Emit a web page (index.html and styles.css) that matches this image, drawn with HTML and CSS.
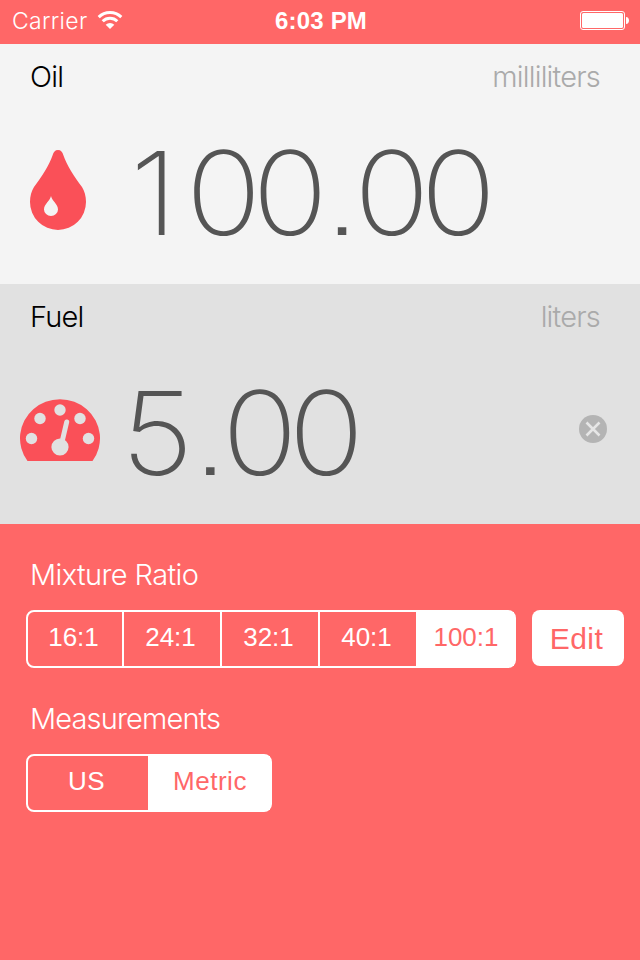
FILE: index.html
```html
<!DOCTYPE html>
<html lang="en">
<head>
  <meta charset="UTF-8" />
  <title>Fuel Mix</title>
  <link rel="stylesheet" href="styles.css">
</head>
<body>

  <!-- Status Bar -->
  <div class="status-bar">
    <div class="carrier">
      <span class="carrier-name">Carrier</span>
      <svg class="wifi" width="26" height="20" viewBox="0 0 26 20">
        <g fill="none" stroke="#fff" stroke-width="3">
          <path d="M1.7 7.1a16 16 0 0 1 22.6 0" />
          <path d="M5.7 11.3a10.4 10.4 0 0 1 14.6 0" />
        </g>
        <path d="M13 19l-4.3-4.3a6.2 6.2 0 0 1 8.6 0z" fill="#fff" />
      </svg>
    </div>
    <div class="clock">6:03 PM</div>
    <div class="battery">
      <svg width="50" height="20" viewBox="0 0 50 20">
        <rect x=".5" y=".5" width="44" height="18" rx="2.5" fill="none" stroke="#fff" />
        <rect x="2" y="2" width="41" height="15" rx="1.5" fill="#fff" />
        <path d="M46 6c4 0 4 7 0 7z" fill="#fff" />
      </svg>
    </div>
  </div>

  <!-- Oil -->
  <div class="panel oil">
    <div class="panel-head">
      <span class="name">Oil</span>
      <span class="unit">milliliters</span>
    </div>
    <div class="panel-body">
      <svg class="icon" width="80" height="80" viewBox="0 0 80 80">
        <path fill="#fa5058" fill-rule="evenodd" d="M40 0C43 0 44.500 2 45.300 5C49 16 56 26 64 37C66.500 41 68 46 68 52A28 28 0 0 1 12 52C12 46 13.500 41 16 37C24 26 31 16 34.700 5C35.500 2 37 0 40 0ZM33 46C32 51 26 54 26 59.500A7 6.500 0 0 0 40 59.500C40 54 34 51 33 46Z" />
      </svg>
      <span class="value"><span class="one">1</span>00<span class="point">.</span>00</span>
    </div>
  </div>

  <!-- Fuel -->
  <div class="panel fuel">
    <div class="panel-head">
      <span class="name">Fuel</span>
      <span class="unit">liters</span>
    </div>
    <div class="panel-body">
      <svg class="icon" width="80" height="80" viewBox="0 0 80 80">
        <path d="M7.500 70A40 39 0 1 1 72.500 70Z" fill="#fa5058" />
        <g fill="#e1e1e1">
          <circle cx="11.500" cy="47.500" r="5.700" />
          <circle cx="20" cy="27.500" r="5.700" />
          <circle cx="40" cy="19" r="5.700" />
          <circle cx="60" cy="27.500" r="5.700" />
          <circle cx="68.500" cy="47.500" r="5.700" />
          <circle cx="40" cy="56" r="8.600" />
        </g>
        <path d="M42 51L46.700 31" stroke="#e1e1e1" stroke-width="5" stroke-linecap="round" />
      </svg>
      <span class="value">5<span class="point">.</span>00</span>
      <svg class="clear" width="28" height="28" viewBox="0 0 28 28">
        <circle cx="14" cy="14" r="14" fill="#b4b4b4" />
        <path d="M7.500 7.500l13 13M20.500 7.500l-13 13" stroke="#e6e6e6" stroke-width="2.600" />
      </svg>
    </div>
  </div>

  <!-- Settings -->
  <div class="settings">
    <h2>Mixture Ratio</h2>
    <div class="row">
      <div class="segments ratio">
        <span>16:1</span>
        <span>24:1</span>
        <span>32:1</span>
        <span>40:1</span>
        <span class="active">100:1</span>
      </div>
      <div class="edit">Edit</div>
    </div>
    <h2 class="second">Measurements</h2>
    <div class="row">
      <div class="segments measure">
        <span>US</span>
        <span class="active">Metric</span>
      </div>
    </div>
  </div>

</body>
</html>
```
FILE: styles.css
```css
/* Basic Reset */
* {
  margin: 0;
  padding: 0;
  box-sizing: border-box;
}

body {
  width: 640px;
  height: 960px;
  font-family: "Liberation Sans", Arial, sans-serif;
  background: #ff6767;
  color: #fff;
  overflow: hidden;
  white-space: nowrap;
}

/* Status Bar */
.status-bar {
  display: grid;
  grid-template-columns: 1fr auto 1fr;
  height: 44px;
  padding: 0 10px 0 12px;
  line-height: 42px;
  font-size: 24px;
}

.carrier {
  display: flex;
  gap: 10px;
}

.carrier-name {
  font-family: Inter, sans-serif;
  font-weight: 300;
  font-size: 23px;
  letter-spacing: 0.3px;
}

.wifi {
  margin-top: 10px;
}

.clock {
  font-weight: bold;
  letter-spacing: 0.2px;
}

.battery {
  display: flex;
  justify-content: flex-end;
  padding-top: 11px;
}

/* Oil and Fuel */
.panel {
  height: 240px;
}

.oil {
  background: #f4f4f4;
}

.fuel {
  background: #e1e1e1;
}

.panel-head {
  display: flex;
  justify-content: space-between;
  height: 66px;
  padding: 0 40px 0 30px;
  font-family: Inter, sans-serif;
  font-size: 29px;
  font-weight: 300;
  letter-spacing: -0.8px;
  line-height: 66px;
}

.name {
  color: #000;
}

.unit {
  color: #aaa;
}

.panel-body {
  display: flex;
  padding-left: 18px;
}

.icon {
  margin-top: 40px;
}

.fuel .icon {
  margin: 41px 0 0 2px;
}

.value {
  margin-left: 32px;
  font-family: Inter, sans-serif;
  font-size: 116px;
  font-weight: 170;
  font-feature-settings: "ss07";
  letter-spacing: -8.5px;
  line-height: 166px;
  color: #555;
  transform: scaleX(1.08);
  transform-origin: left;
}

.fuel .value {
  margin-left: 21px;
}

.one {
  margin-right: 16px;
}

.point {
  margin: 0 3.5px 0 5.5px;
}

.fuel .point {
  margin-left: 8px;
}

.clear {
  margin: 65px 33px 0 auto;
}

/* Settings */
.settings {
  padding: 30px 16px 0 26px;
}

.settings h2 {
  height: 42px;
  margin-bottom: 14px;
  padding-left: 4px;
  font-family: Inter, sans-serif;
  font-size: 29px;
  font-weight: 300;
  letter-spacing: -0.6px;
  line-height: 42px;
}

.settings .second {
  margin-top: 30px;
  letter-spacing: -0.85px;
}

.row {
  display: flex;
  justify-content: space-between;
}

.segments {
  display: flex;
  height: 58px;
  border: 2px solid #fff;
  border-radius: 8px;
  font-size: 26px;
  line-height: 51px;
  text-align: center;
}

.segments span {
  flex: none;
  width: 98px;
  padding-right: 3px;
}

.segments span + span {
  border-left: 2px solid #fff;
}

.ratio {
  width: 490px;
}

.ratio span:first-child {
  width: 94px;
}

.ratio .active {
  padding-right: 0;
}

.measure {
  width: 246px;
  letter-spacing: 0.5px;
}

.measure span {
  width: 120px;
}

.measure .active {
  width: 122px;
  padding-right: 0;
}

.segments .active {
  background: #fff;
  color: #ff6767;
}

.edit {
  width: 92px;
  height: 56px;
  padding-right: 3px;
  border-radius: 8px;
  background: #fff;
  color: #ff6767;
  font-size: 30px;
  letter-spacing: 0.4px;
  line-height: 58px;
  text-align: center;
}
```
